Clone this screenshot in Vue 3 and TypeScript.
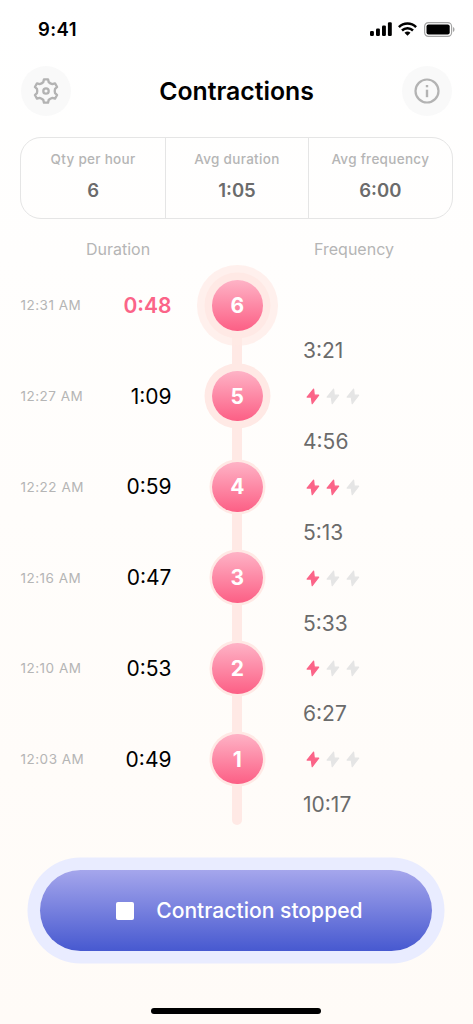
<script setup lang="ts">
import { ref } from 'vue'

interface Contraction {
  id: number
  time: string
  duration: string
  interval: string
  // pain level from 0 to 3, empty while the contraction is the latest one
  level: number | null
  ring: 'thin' | 'medium' | 'wide'
}

const stats = [
  { label: 'Qty per hour', value: '6' },
  { label: 'Avg duration', value: '1:05' },
  { label: 'Avg frequency', value: '6:00' },
]

const contractions = ref<Contraction[]>([
  { id: 6, time: '12:31 AM', duration: '0:48', interval: '3:21', level: null, ring: 'wide' },
  { id: 5, time: '12:27 AM', duration: '1:09', interval: '4:56', level: 1, ring: 'medium' },
  { id: 4, time: '12:22 AM', duration: '0:59', interval: '5:13', level: 2, ring: 'thin' },
  { id: 3, time: '12:16 AM', duration: '0:47', interval: '5:33', level: 1, ring: 'thin' },
  { id: 2, time: '12:10 AM', duration: '0:53', interval: '6:27', level: 1, ring: 'thin' },
  { id: 1, time: '12:03 AM', duration: '0:49', interval: '10:17', level: 1, ring: 'thin' },
])
</script>

<template>
  <div class="screen">
    <!-- Status bar -->
    <div class="status-bar">
      <span class="clock">9:41</span>
      <div class="status-icons">
        <svg width="22" height="14" viewBox="0 0 22 14">
          <rect x="0" y="9" width="3.9" height="5" rx="1.2" />
          <rect x="6" y="6.5" width="3.9" height="7.5" rx="1.2" />
          <rect x="12" y="3.5" width="3.9" height="10.5" rx="1.2" />
          <rect x="17.9" y="0.3" width="3.9" height="13.7" rx="1.2" />
        </svg>
        <svg width="19" height="14" viewBox="0 0 19 14">
          <g fill="none" stroke="#000" stroke-width="2.5">
            <path d="M0.9 5.1a12.3 12.3 0 0 1 17.2 0" />
            <path d="M4 8.5a7.9 7.9 0 0 1 11 0" />
          </g>
          <path d="M9.5 13.8l-3-3a4.4 4.4 0 0 1 6 0z" />
        </svg>
        <svg class="battery" width="31" height="15" viewBox="0 0 31 15">
          <rect x="0.6" y="0.6" width="27" height="13.8" rx="3.8" fill="none" stroke="#a5a5a5" stroke-width="1.2" />
          <rect x="2.5" y="2.5" width="23.2" height="10" rx="2" />
          <path d="M29 5v5c1-.4 1.5-1.4 1.5-2.5S30 5.4 29 5z" fill="#a5a5a5" />
        </svg>
      </div>
    </div>

    <!-- Header -->
    <header class="header">
      <button class="round-btn" aria-label="Settings">
        <svg width="28" height="28" viewBox="0 0 28 28" fill="none" stroke="#b3b3b3" stroke-width="2.3" stroke-linejoin="round">
          <path
            d="M11.95 2.38H16.05L16.72 5.11Q18.2 6.73 20.34 7.2L23.04 6.42 25.09 9.96 23.06 11.91Q22.4 14 23.06 16.09L25.09 18.04 23.04 21.58 20.34 20.8Q18.2 21.27 16.72 22.89L16.05 25.62H11.95L11.28 22.89Q9.8 21.27 7.66 20.8L4.96 21.58 2.91 18.04 4.94 16.09Q5.6 14 4.94 11.91L2.91 9.96 4.96 6.42 7.66 7.2Q9.8 6.73 11.28 5.11Z"
          />
          <circle cx="14" cy="14" r="2.7" />
        </svg>
      </button>
      <h1 class="title">Contractions</h1>
      <button class="round-btn" aria-label="Info">
        <svg width="28" height="28" viewBox="0 0 28 28" fill="none" stroke="#b3b3b3" stroke-width="2.2">
          <circle cx="14" cy="14" r="11.5" />
          <path d="M14 12.7v7.5" stroke-width="2.4" />
          <path d="M14 8v2.3" stroke-width="2.4" />
        </svg>
      </button>
    </header>

    <!-- Averages -->
    <section class="stats">
      <div v-for="stat in stats" :key="stat.label" class="stat">
        <span class="stat-label">{{ stat.label }}</span>
        <span class="stat-value">{{ stat.value }}</span>
      </div>
    </section>

    <div class="columns">
      <span class="col-duration">Duration</span>
      <span class="col-frequency">Frequency</span>
    </div>

    <!-- Timeline -->
    <ul class="timeline">
      <li v-for="(item, index) in contractions" :key="item.id" class="row">
        <span class="time">{{ item.time }}</span>
        <span :class="['duration', { 'duration-active': index === 0 }]">{{ item.duration }}</span>
        <span :class="['node', `node-${item.ring}`]">{{ item.id }}</span>
        <span class="bolts">
          <template v-if="item.level !== null">
            <svg
              v-for="n in 3"
              :key="n"
              :class="['bolt', { 'bolt-on': n <= item.level }]"
              width="14"
              height="17"
              viewBox="0 0 14 17"
            >
              <path d="M7.6 1.1L1.1 9.1H5.3L6.2 15.6 12.7 7.2H8.3z" />
            </svg>
          </template>
        </span>
        <span class="interval">{{ item.interval }}</span>
      </li>
    </ul>

    <button class="stop-btn">
      <span class="stop-icon"></span>
      <span>Contraction stopped</span>
    </button>

    <div class="home-indicator"></div>
  </div>
</template>

<style>
body {
  margin: 0;
}
</style>

<style scoped>
.screen {
  display: flex;
  flex-direction: column;
  box-sizing: border-box;
  width: 473px;
  height: 1024px;
  overflow: hidden;
  font-family: Inter, 'Liberation Sans', sans-serif;
  background: linear-gradient(180deg, #ffffff 0%, #fffbf7 100%);
}

button {
  padding: 0;
  border: none;
  font-family: inherit;
}

/* Status bar */
.status-bar {
  display: flex;
  justify-content: space-between;
  align-items: center;
  height: 58px;
  padding: 0 18px 0 38px;
}

.clock {
  font-size: 18.5px;
  font-weight: 600;
  letter-spacing: 0.4px;
}

.status-icons {
  display: flex;
  align-items: center;
  gap: 6px;
}

.battery {
  margin-left: 1px;
}

/* Header */
.header {
  display: flex;
  justify-content: space-between;
  align-items: center;
  height: 66px;
  padding: 0 21px;
}

.round-btn {
  display: flex;
  align-items: center;
  justify-content: center;
  width: 50px;
  height: 50px;
  border-radius: 50%;
  background: #f9f9f9;
}

.title {
  margin: 0;
  font-size: 24.8px;
  font-weight: 600;
}

/* Averages */
.stats {
  display: grid;
  grid-template-columns: repeat(3, 1fr);
  box-sizing: border-box;
  height: 82px;
  margin: 12.5px 20.5px 0 20.4px;
  border: 1.25px solid #e5e5e5;
  border-radius: 21px;
}

.stat {
  display: flex;
  flex-direction: column;
  align-items: center;
  padding-top: 12.5px;
}

.stat + .stat {
  border-left: 1px solid #e5e5e5;
}

.stat-label {
  font-size: 13.5px;
  line-height: 18px;
  font-weight: 500;
  letter-spacing: 0.3px;
  color: #b5b5b5;
}

.stat-value {
  margin-top: 9.5px;
  font-size: 18.5px;
  line-height: 24px;
  font-weight: 600;
  color: #6b6b6b;
}

/* Column captions */
.columns {
  display: grid;
  grid-template-columns: 236px 236px;
  height: 64.1px;
  font-size: 16px;
  line-height: 61px;
  color: #b5b5b5;
}

.col-duration,
.col-frequency {
  text-align: center;
}

/* Timeline */
.timeline {
  position: relative;
  margin: 0;
  padding: 0;
  list-style: none;
}

/* Rail behind the nodes */
.timeline::before {
  content: '';
  position: absolute;
  top: 24px;
  bottom: 2px;
  left: 232px;
  width: 10px;
  border-radius: 5px;
  background: #ffe9e5;
}

.row {
  position: relative;
  display: grid;
  grid-template-columns: 80px 71px 40.5px 50.5px 1fr;
  grid-template-rows: 45.4px 45.4px;
  align-items: center;
  padding-left: 20.5px;
}

.time {
  font-size: 13.5px;
  letter-spacing: 0.5px;
  white-space: nowrap;
  color: #b5b5b5;
}

.duration {
  text-align: right;
  font-size: 21px;
  color: #000;
}

.duration-active {
  font-weight: 600;
  color: #fb6488;
}

.node {
  grid-column: 4;
  display: flex;
  align-items: center;
  justify-content: center;
  width: 50.5px;
  height: 50.5px;
  margin: -3px 0;
  border-radius: 50%;
  font-size: 21px;
  font-weight: 700;
  color: #fff;
  background: linear-gradient(180deg, #feb3c6 0%, #fc5f85 100%);
}

.node-thin {
  box-shadow: 0 0 0 2.5px #ffe9e5;
}

.node-medium {
  box-shadow: 0 0 0 7.5px #ffe9e5;
}

.node-wide {
  box-shadow:
    0 0 0 7.5px #ffe9e5,
    0 0 0 15px rgba(255, 233, 229, 0.7);
}

.bolts {
  grid-column: 5;
  display: flex;
  gap: 6px;
  margin: 1px 0 0 43.5px;
}

.bolt {
  flex: none;
  fill: #e5e5e5;
  stroke: #e5e5e5;
  stroke-width: 1.2px;
  stroke-linejoin: round;
}

.bolt-on {
  fill: #fb6488;
  stroke: #fb6488;
}

.interval {
  grid-row: 2;
  grid-column: 5;
  margin-left: 40.5px;
  font-size: 21px;
  color: #6b6b6b;
}

/* Main action */
.stop-btn {
  display: flex;
  flex: none;
  align-items: center;
  justify-content: center;
  gap: 22px;
  box-sizing: border-box;
  width: 392px;
  height: 81px;
  margin: 42.9px 0 0 40.4px;
  padding-left: 6px;
  border-radius: 41px;
  font-size: 21.1px;
  font-weight: 500;
  color: #fff;
  background: linear-gradient(180deg, #a5a6ec 0%, #4759d0 100%);
  box-shadow: 0 0 0 12.5px #e9ecff;
}

.stop-icon {
  width: 18px;
  height: 18px;
  border-radius: 2px;
  background: #fff;
}

.home-indicator {
  width: 170px;
  height: 6.3px;
  margin: auto auto 9.6px 151px;
  border-radius: 3px;
  background: #000;
}
</style>
